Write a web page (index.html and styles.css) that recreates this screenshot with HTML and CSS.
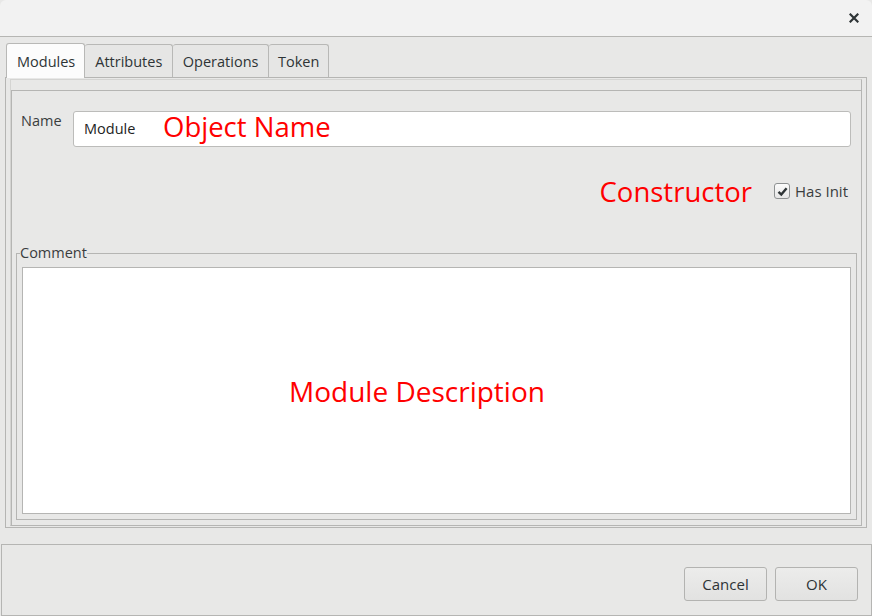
FILE: index.html
```html
<!DOCTYPE html>
<html>
<head>
<meta charset="utf-8">
<link rel="stylesheet" href="styles.css">
</head>
<body>
<div class="window">
  <header class="titlebar">
    <svg class="close" width="10" height="10" viewBox="0 0 10 10"><path d="M1.5 1.5 L8.5 8.5 M8.5 1.5 L1.5 8.5" stroke="#2e3436" stroke-width="2.2" stroke-linecap="square"/></svg>
  </header>
  <main class="content">
    <nav class="tabs">
      <div class="tab active">Modules</div>
      <div class="tab tab-attr">Attributes</div>
      <div class="tab tab-ops">Operations</div>
      <div class="tab">Token</div>
    </nav>
    <section class="pane">
      <div class="scroll">
        <div class="frame">
          <div class="name-row">
            <label class="lbl">Name</label>
            <div class="input">
              <span class="value">Module</span>
              <span class="note note-name">Object Name</span>
            </div>
          </div>
          <div class="check-row">
            <span class="note">Constructor</span>
            <span class="checkbox">
              <svg width="11" height="11" viewBox="0 0 11 11"><path d="M1.5 5.8 L4.3 8.5 L9.6 2.2" fill="none" stroke="#2e3436" stroke-width="2.4"/></svg>
            </span>
            <span class="lbl lbl-check">Has Init</span>
          </div>
          <fieldset class="comment">
            <legend>Comment</legend>
            <div class="textarea">
              <span class="note note-desc">Module Description</span>
            </div>
          </fieldset>
        </div>
      </div>
    </section>
  </main>
  <footer class="buttons">
    <button class="btn">Cancel</button>
    <button class="btn">OK</button>
  </footer>
</div>
</body>
</html>
```
FILE: styles.css
```css
* { box-sizing: border-box; }
html, body { margin: 0; padding: 0; }
body {
  width: 872px;
  height: 616px;
  overflow: hidden;
  background: #e8e8e7;
  font-family: "Open Sans", "DejaVu Sans", sans-serif;
  font-size: 14.5px;
  color: #2e3436;
}
.window { display: flex; flex-direction: column; height: 616px; }
.titlebar {
  height: 37px;
  background: #f2f2f2;
  border-bottom: 1px solid #b6b6b3;
  border-radius: 6px 6px 0 0;
  display: flex;
  align-items: center;
  justify-content: flex-end;
  padding-right: 13px;
}
.close { display: block; }
.content { padding: 6px 5px 0 5px; }
.tabs { display: flex; align-items: flex-end; height: 34px; padding-left: 1px; }
.tab {
  height: 33px;
  padding: 0 9px;
  display: flex;
  align-items: center;
  padding-top: 1px;
  font-size: 14.5px;
  color: #2e3436;
  background: #e6e6e5;
  border: 1px solid #b8b8b6;
  border-bottom: none;
  border-left: none;
  border-radius: 3px 3px 0 0;
}
.tab-attr { padding: 1px 10px 0 10px; }
.tab-ops { padding: 1px 9.5px 0 9.5px; }
.tab.active {
  height: 35px;
  background: #fcfcfc;
  border-left: 1px solid #b8b8b6;
  padding: 0 9px 0 10px;
  margin-bottom: -1px;
  position: relative;
  z-index: 1;
}
.pane {
  height: 451px;
  border: 1px solid #b5b5b3;
  background: #e8e8e7;
  padding: 1px 4px 1px 4px;
}
.scroll {
  height: 100%;
  border: 1px solid #d4d4d2;
  border-right-color: #b5b5b3;
  border-bottom-color: #b5b5b3;
  padding-top: 10px;
}
.frame {
  height: 100%;
  border-top: 1px solid #b5b5b3;
  border-left: 1px solid #b5b5b3;
  display: flex;
  flex-direction: column;
}
.name-row {
  display: flex;
  align-items: flex-start;
  margin-top: 20px;
  padding-left: 9px;
  padding-right: 10px;
}
.lbl { color: #3a3d3e; font-size: 14.5px; }
.name-row .lbl { width: 52px; line-height: 20px; }
.input {
  flex: 1;
  height: 36px;
  background: #fff;
  border: 1px solid #bcbcba;
  border-radius: 3px;
  display: flex;
  align-items: center;
  padding-left: 10px;
  padding-bottom: 3px;
}
.value { color: #222; font-size: 14.5px; width: 79px; margin-top: 2px; }
.note {
  color: #ff0000;
  font-size: 27.5px;
  line-height: 32px;
}
.note-name { margin-top: -2px; }
.note-desc { font-size: 28px; }
.check-row {
  display: flex;
  justify-content: flex-end;
  align-items: center;
  height: 36px;
  margin-top: 26px;
  padding-right: 13px;
}
.check-row .note { margin-right: 22px; margin-top: 1px; }
.lbl-check { font-size: 15px; }
.checkbox {
  width: 16px;
  height: 16px;
  border: 1px solid #8e9192;
  border-radius: 3px;
  background: linear-gradient(#fbfbfb, #e6e6e6);
  display: flex;
  align-items: center;
  justify-content: center;
  margin-right: 5px;
}
.checkbox svg { display: block; }
.comment {
  flex: 1;
  margin: 34px 4px 5px 4px;
  border: 1px solid #b5b5b3;
  padding: 4px 5px 5px 5px;
  min-width: 0;
  display: flex;
  flex-direction: column;
}
.comment legend {
  padding: 0;
  margin-left: -2px;
  font-size: 14.5px;
  line-height: 20px;
  color: #3a3d3e;
}
.textarea {
  flex: 1;
  background: #fff;
  border: 1px solid #b5b5b3;
  display: flex;
  align-items: center;
  padding-left: 266px;
}
.buttons {
  margin-top: 16px;
  flex: 1;
  margin-left: 1px;
  border: 1px solid #b5b5b3;
  display: flex;
  justify-content: flex-end;
  align-items: flex-start;
  gap: 8px;
  padding: 22px 13px 0 0;
}
.btn {
  width: 83px;
  height: 34px;
  border: 1px solid #b3b3b1;
  border-radius: 3px;
  background: linear-gradient(#ececeb, #e2e2e1);
  font-family: "Open Sans", "DejaVu Sans", sans-serif;
  font-size: 15px;
  color: #2e3436;
  padding: 0;
}
```
